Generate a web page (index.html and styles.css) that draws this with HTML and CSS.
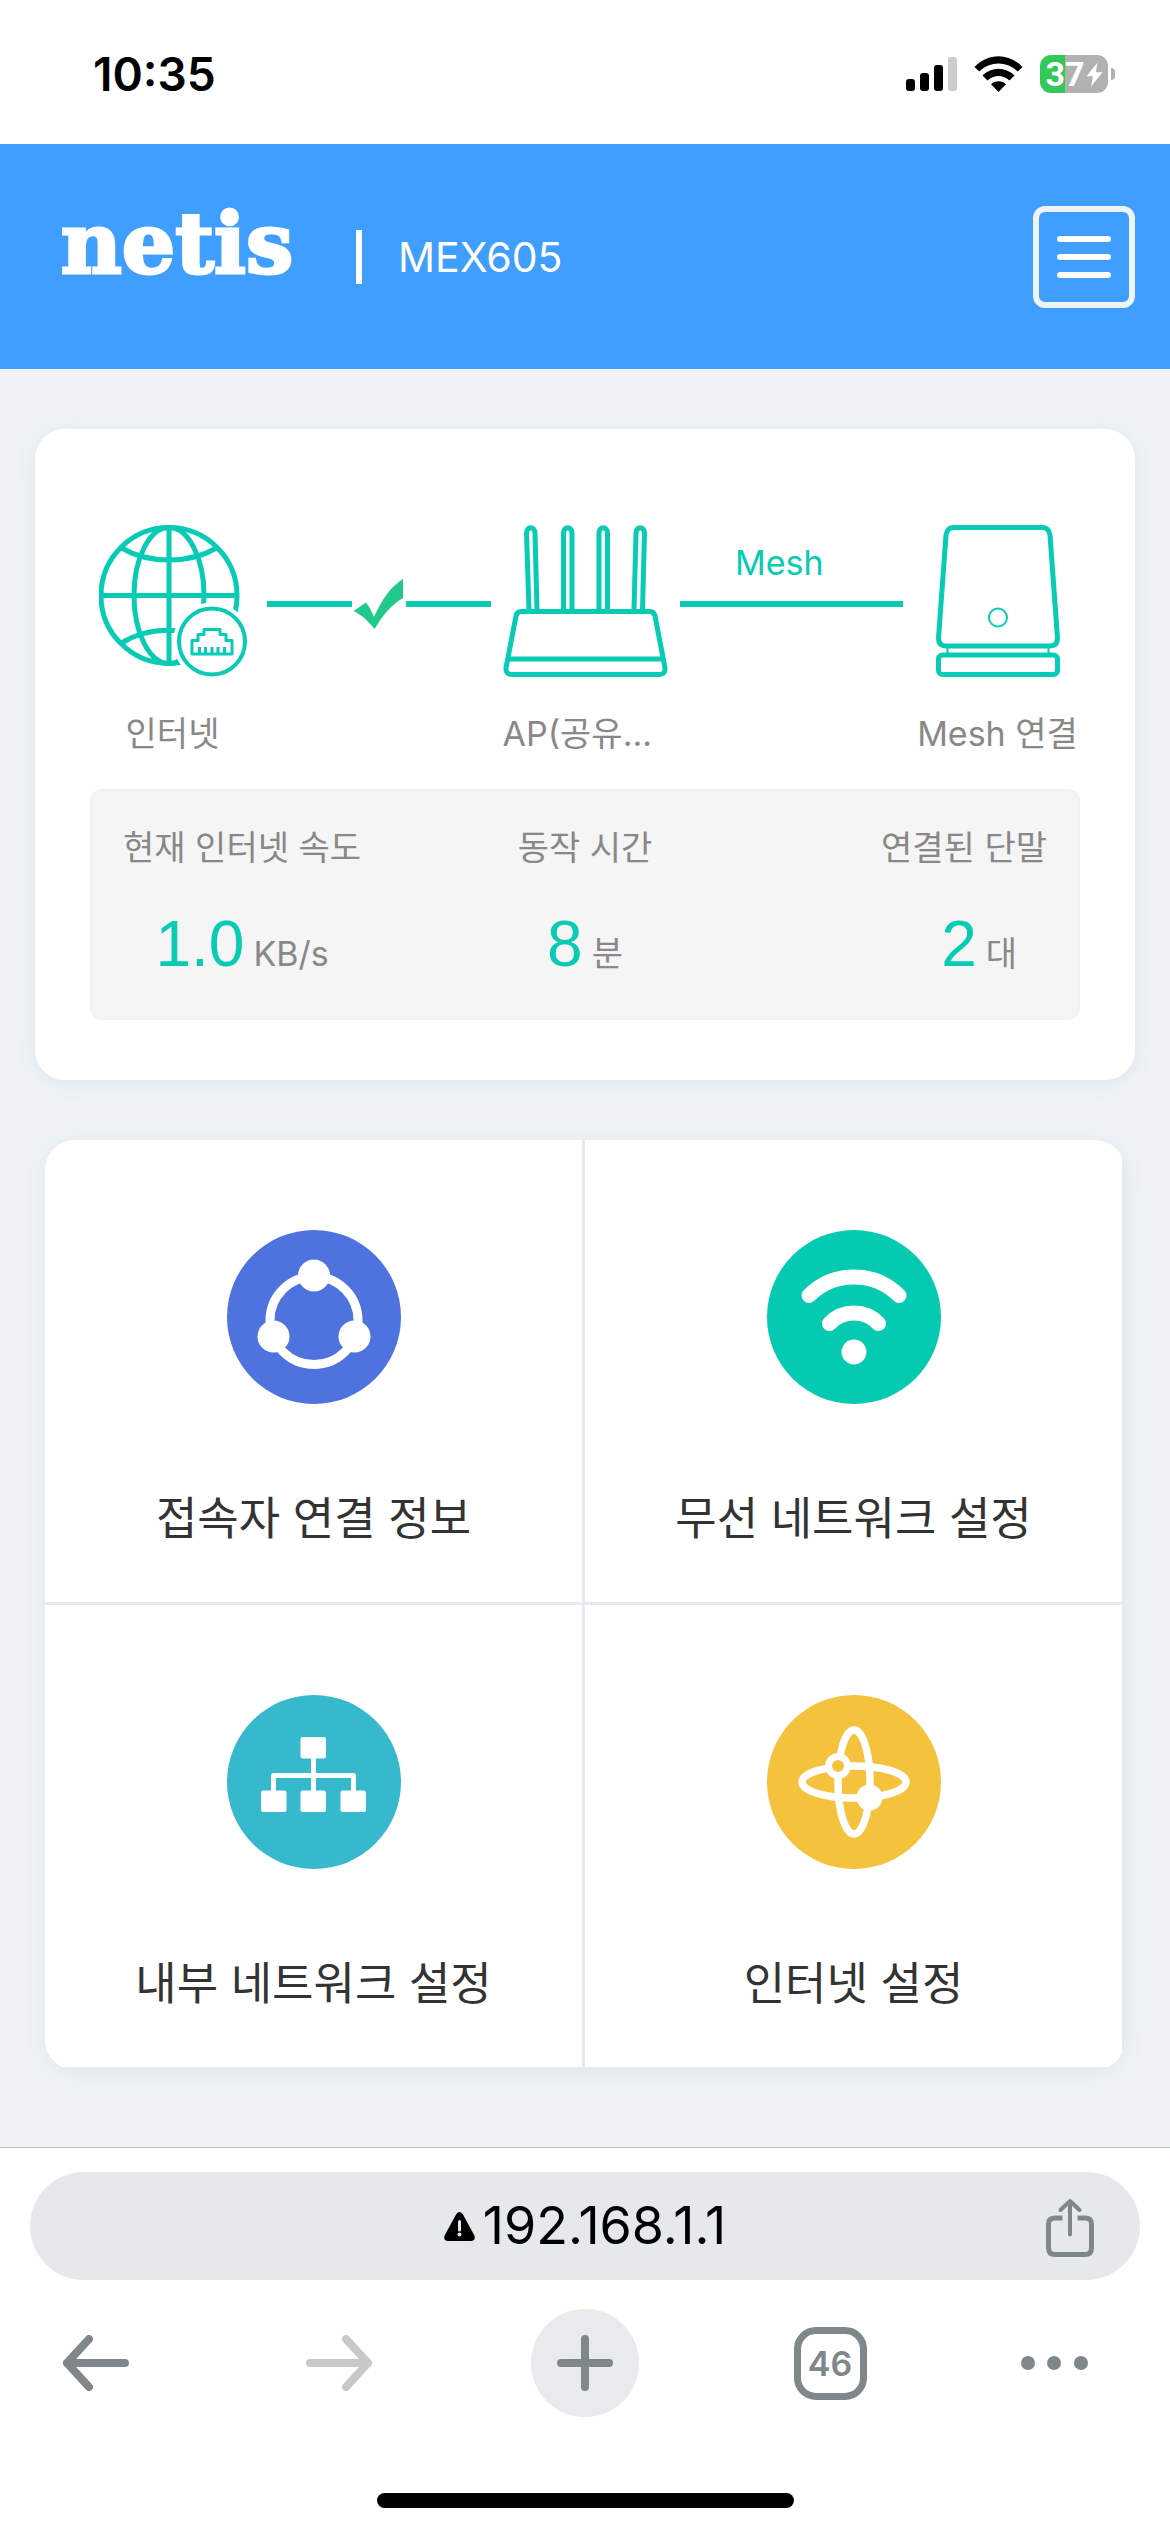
FILE: index.html
```html
<!DOCTYPE html>
<html lang="ko">
<head>
<meta charset="utf-8">
<meta name="viewport" content="width=device-width, initial-scale=1">
<title>netis MEX605</title>
<link rel="stylesheet" href="styles.css">
</head>
<body>
<div class="status-bar">
  <time class="clock">10:35</time>
  <div class="status-icons">
    <svg class="signal" width="51" height="34" viewBox="0 0 51 34" aria-hidden="true">
      <rect x="0" y="22" width="9" height="12" rx="3"/><rect x="14" y="16" width="9" height="18" rx="3"/><rect x="28" y="8" width="9" height="26" rx="3"/><rect x="42" y="0" width="9" height="34" rx="3" fill="#ccc"/>
    </svg>
    <svg class="wifi" width="49" height="36" viewBox="0 0 49 36" aria-hidden="true">
      <path d="M0.500 11C14-3.500 35-3.500 48.500 11L43.800 15.600C33 4.800 16 4.800 5.200 15.600Z"/>
      <path d="M8.500 19.500C17.500 10.500 31.500 10.500 40.500 19.500L35.500 24.500C29 18.500 20 18.500 13.500 24.500Z"/>
      <path d="M17 28.200C21 24.300 28 24.300 32 28.200L24.500 36Z"/>
    </svg>
    <div class="battery">
      <span class="battery-cell"><span class="battery-level">37</span><svg width="17" height="25" viewBox="0 0 17 25" aria-hidden="true"><path d="M11.500 0.500L0.500 14.200H7L5 24.500L16.500 10.200H9.800Z" fill="#fff"/></svg></span>
      <span class="battery-tip"></span>
    </div>
  </div>
</div>

<header class="app-header">
  <span class="logo">netis</span>
  <span class="divider"></span>
  <h1 class="model">MEX605</h1>
  <button class="menu-button" type="button" aria-label="메뉴"><span></span><span></span><span></span></button>
</header>

<main class="content">
  <section class="card">
    <div class="topology">
      <div class="node">
        <svg width="148" height="152" viewBox="0 0 148 152" fill="none" stroke="#07cbb4" stroke-width="5" aria-hidden="true">
          <circle cx="70" cy="70.500" r="68"/>
          <ellipse cx="70" cy="70.500" rx="35" ry="68"/>
          <path d="M70 2V139M2 70.500H138M22.500 23C50 39 90 39 117.500 23M22.500 118C50 101 90 101 117.500 118"/>
          <circle cx="113" cy="116.500" r="39" fill="#fff" stroke="none"/>
          <circle cx="113" cy="116.500" r="33" stroke-width="4"/>
          <path d="M93 129V115.500H99V109.500H105V104.500H121V109.500H127V115.500H133V129Z M100.500 129V122M106.500 129V122M113 129V122M119 129V122M125.500 129V122" stroke-width="3" stroke-linejoin="round"/>
        </svg>
        <span class="node-label">인터넷</span>
      </div>
      <div class="link">
        <span class="line"></span>
        <svg width="54" height="52" viewBox="0 0 54 52" aria-hidden="true"><path d="M1.500 33L14 24.500C17 28 19.500 33 22 39C30 22 38 9 51 1V20C40 26 31 37 22.500 51C16 43 10 37 1.500 33Z" fill="#1fc98a"/></svg>
        <span class="line"></span>
      </div>
      <div class="node">
        <svg width="165" height="152" viewBox="0 0 165 152" fill="none" stroke="#07cbb4" stroke-width="5" stroke-linejoin="round" aria-hidden="true">
          <path d="M26 85L23.500 8C23.500 1 32 1 32 8L34 85M60.500 85V8C60.500 1 69 1 69 8V85M96 85V8C96 1 104.500 1 104.500 8V85M131 85L133 8C133 1 141.500 1 141.500 8L139.500 85"/>
          <path d="M18 86.500H147Q151 86.500 152 91L162 143Q162.500 149.500 156 149.500H9Q2.500 149.500 3 143L13 91Q14 86.500 18 86.500ZM6 134H159"/>
        </svg>
        <span class="node-label node-label-clipped">AP(공유...</span>
      </div>
      <div class="link link-mesh">
        <span class="link-label">Mesh</span>
        <span class="line"></span>
      </div>
      <div class="node">
        <svg width="124" height="152" viewBox="0 0 124 152" fill="none" stroke="#07cbb4" stroke-width="5" aria-hidden="true">
          <path d="M18 2.500H106Q113 2.500 114 10L121.500 113Q121.500 121 114 121H10Q2.500 121 2.500 113L10 10Q11 2.500 18 2.500Z"/>
          <rect x="2.500" y="130" width="119" height="19.500" rx="4"/>
          <path d="M11.500 122V129M112.500 122V129" stroke-width="2"/>
          <circle cx="62" cy="92.500" r="9" stroke-width="2"/>
        </svg>
        <span class="node-label">Mesh 연결</span>
      </div>
    </div>

    <dl class="stats">
      <div class="stat"><dt>현재 인터넷 속도</dt><dd><b>1.0</b><span>KB/s</span></dd></div>
      <div class="stat"><dt>동작 시간</dt><dd><b>8</b><span>분</span></dd></div>
      <div class="stat stat-devices"><dt>연결된 단말</dt><dd><b>2</b><span>대</span></dd></div>
    </dl>
  </section>

  <nav class="tiles" aria-label="설정">
    <a class="tile" href="#clients">
      <svg width="174" height="174" viewBox="0 0 174 174" aria-hidden="true">
        <circle cx="87" cy="87" r="87" fill="#4e73df"/>
        <circle cx="87" cy="90.500" r="44" fill="none" stroke="#fff" stroke-width="9"/>
        <g fill="#fff"><circle cx="87" cy="45.500" r="16"/><circle cx="46.500" cy="106.500" r="16"/><circle cx="127.500" cy="106.500" r="16"/></g>
      </svg>
      <span>접속자 연결 정보</span>
    </a>
    <a class="tile" href="#wireless">
      <svg width="174" height="174" viewBox="0 0 174 174" aria-hidden="true">
        <circle cx="87" cy="87" r="87" fill="#04cab1"/>
        <path d="M42 65.500A64 64 0 0 1 132 65.500M62.500 93.500A34 34 0 0 1 111.500 93.500" fill="none" stroke="#fff" stroke-width="15" stroke-linecap="round"/>
        <circle cx="87" cy="122" r="12.500" fill="#fff"/>
      </svg>
      <span>무선 네트워크 설정</span>
    </a>
    <a class="tile" href="#lan">
      <svg width="174" height="174" viewBox="0 0 174 174" aria-hidden="true">
        <circle cx="87" cy="87" r="87" fill="#36b8cd"/>
        <g fill="#fff"><rect x="73.500" y="42" width="25.500" height="21.500" rx="2"/><rect x="34" y="95.500" width="25.500" height="21.500" rx="2"/><rect x="73.500" y="95.500" width="25.500" height="21.500" rx="2"/><rect x="113.500" y="95.500" width="25.500" height="21.500" rx="2"/></g>
        <path d="M86.500 62V97M46.500 97V80.500H126.500V97" fill="none" stroke="#fff" stroke-width="5" stroke-linejoin="round"/>
      </svg>
      <span>내부 네트워크 설정</span>
    </a>
    <a class="tile" href="#internet">
      <svg width="174" height="174" viewBox="0 0 174 174" aria-hidden="true">
        <circle cx="87" cy="87" r="87" fill="#f5c23e"/>
        <g fill="none" stroke="#fff" stroke-width="7.500"><ellipse cx="87" cy="87" rx="16" ry="52"/><ellipse cx="87" cy="87" rx="52" ry="16"/></g>
        <circle cx="71" cy="71" r="9.500" fill="#f5c23e" stroke="#fff" stroke-width="7"/>
        <circle cx="102.500" cy="102.500" r="13" fill="#fff"/>
      </svg>
      <span>인터넷 설정</span>
    </a>
  </nav>
</main>

<footer class="browser-bar">
  <div class="address-bar">
    <button class="address" type="button">
      <svg width="31" height="29" viewBox="0 0 31 29" aria-hidden="true"><path d="M12.300 2Q15.500-1.800 18.700 2L30.400 23.500Q32 28.500 27 29H4Q-1 28.500 0.600 23.500Z"/><path d="M15.500 9.500V18" stroke="#e6e9ec" stroke-width="3" stroke-linecap="round"/><circle cx="15.500" cy="22.500" r="2" fill="#e6e9ec"/></svg>
      <span>192.168.1.1</span>
    </button>
    <button class="share" type="button" aria-label="공유">
      <svg width="48" height="60" viewBox="0 0 48 60" fill="none" stroke="#80878a" stroke-width="5" stroke-linecap="round" stroke-linejoin="round" aria-hidden="true">
        <path d="M16.500 20H9Q2.500 20 2.500 26V50Q2.500 56.500 9 56.500H39Q45.500 56.500 45.500 50V26Q45.500 20 39 20H31.500" stroke-linecap="butt"/><path d="M24 36.500V3.500M14.500 12L24 3L33.500 12" stroke-width="4"/>
      </svg>
    </button>
  </div>
  <div class="toolbar">
    <button class="tool" type="button" aria-label="뒤로"><svg width="68" height="56" viewBox="0 0 68 56" fill="none" stroke="#80878a" stroke-width="8" stroke-linecap="round" stroke-linejoin="round"><path d="M64 28H6M28 4L6 28L28 52"/></svg></button>
    <button class="tool" type="button" aria-label="앞으로" disabled><svg width="68" height="56" viewBox="0 0 68 56" fill="none" stroke="#c8c8c8" stroke-width="8" stroke-linecap="round" stroke-linejoin="round"><path d="M4 28H62M40 4L62 28L40 52"/></svg></button>
    <button class="tool tool-new" type="button" aria-label="새 탭"><svg width="56" height="56" viewBox="0 0 56 56" fill="none" stroke="#80878a" stroke-width="8" stroke-linecap="round"><path d="M4 28H52M28 4V52"/></svg></button>
    <button class="tool" type="button" aria-label="탭 46개"><span class="tab-count">46</span></button>
    <button class="tool tool-more" type="button" aria-label="더보기"><svg width="68" height="16" viewBox="0 0 68 16" fill="#80878a"><circle cx="7" cy="8" r="7"/><circle cx="33" cy="8" r="7"/><circle cx="60" cy="8" r="7"/></svg></button>
  </div>
  <div class="home-indicator"></div>
</footer>
</body>
</html>
```
FILE: styles.css
```css
* { box-sizing: border-box; }

body {
  margin: 0;
  min-height: 100vh;
  display: flex;
  flex-direction: column;
  background: #eff3f6;
  color: #333;
  font-family: Inter, "Noto Sans CJK KR", sans-serif;
}

svg { display: block; flex: none; }

button {
  margin: 0;
  padding: 0;
  border: 0;
  background: none;
  color: inherit;
  font: inherit;
  cursor: pointer;
}

/* Status bar */
.status-bar {
  display: flex;
  align-items: center;
  justify-content: space-between;
  height: 144px;
  padding: 4px 55px 0 93px;
  background: #fff;
  color: #000;
}
.clock { font-size: 46px; font-weight: 600; line-height: 56px; }
.status-icons { display: flex; align-items: center; gap: 17px; }
.battery { display: flex; align-items: center; gap: 3px; }
.battery-cell {
  display: flex;
  align-items: center;
  justify-content: center;
  gap: 1px;
  width: 68px;
  height: 38px;
  border-radius: 11px;
  background: linear-gradient(90deg, #34c759 37%, #b1b1b1 37%);
}
.battery-level { color: #fff; font-size: 34px; font-weight: 700; line-height: 38px; font-family: Roboto, sans-serif; }
.battery-tip { width: 4px; height: 12px; border-radius: 0 6px 6px 0; background: #b1b1b1; }

/* Header */
.app-header {
  display: flex;
  align-items: center;
  height: 225px;
  padding: 0 35px 0 52px;
  background: #409eff;
  color: #fff;
}
.logo {
  min-width: 250px;
  padding-bottom: 26px;
  font-family: "DejaVu Serif", serif;
  font-size: 84px;
  font-weight: 700;
  line-height: 84px;
  text-align: center;
  -webkit-text-stroke: 3px #fff;
}
.divider { width: 6px; height: 54px; margin: 0 36px 0 54px; background: #fff; }
.model { margin: 0; font-size: 41px; font-weight: 400; line-height: 56px; }
.menu-button {
  display: flex;
  flex-direction: column;
  align-items: center;
  justify-content: center;
  gap: 12px;
  width: 102px;
  height: 102px;
  margin-left: auto;
  border: 6px solid #eff3f6;
  border-radius: 12px;
}
.menu-button span { width: 54px; height: 6px; border-radius: 3px; background: #fff; }

/* Main */
.content {
  flex: 1;
  display: flex;
  flex-direction: column;
  gap: 60px;
  padding: 60px 35px;
}
.card {
  padding: 96px 55px 60px;
  border-radius: 30px;
  background: #fff;
  box-shadow: 0 3px 24px rgba(50, 80, 120, 0.08);
}

/* Network topology */
.topology { display: flex; align-items: flex-start; color: #888; font-size: 34px; }
.node {
  display: flex;
  flex-direction: column;
  align-items: center;
  gap: 32px;
  width: 165px;
}
.node-label { line-height: 50px; white-space: nowrap; }
.node-label-clipped { align-self: flex-start; }
.link { flex: 1; display: flex; align-items: center; height: 158px; margin: 0 12px; }
.line { flex: 1; height: 6px; background: #07cbb4; }
.link-mesh { display: grid; grid-template-rows: 1fr 6px 1fr; }
.link-label {
  align-self: end;
  padding: 0 24px 18px 0;
  color: #07cbb4;
  line-height: 40px;
  text-align: center;
}

/* Live figures */
.stats {
  display: grid;
  grid-template-columns: repeat(3, 1fr);
  margin: 30px 0 0;
  padding: 31px 30px 37px;
  border: 3px solid #f2f2f2;
  border-radius: 12px;
  background: #f5f5f5;
  color: #888;
  font-size: 34px;
}
.stat { display: flex; flex-direction: column; gap: 35px; justify-self: center; }
.stat:first-child { justify-self: start; }
.stat-devices { justify-self: end; }
.stat dt { line-height: 50px; }
.stat dd {
  display: flex;
  align-items: baseline;
  justify-content: center;
  gap: 9px;
  height: 72px;
  margin: 0;
  line-height: 34px;
}
.stat-devices dd { justify-content: flex-end; padding-right: 30px; }
.stat b {
  color: #07cbb4;
  font-family: "Liberation Sans", sans-serif;
  font-size: 64px;
  font-weight: 400;
  line-height: 72px;
}

/* Settings tiles */
.tiles {
  display: grid;
  grid-template-columns: 1fr 1fr;
  margin: 0 10px;
  border-radius: 30px;
  overflow: hidden;
  background: #fff;
  box-shadow: 0 3px 24px rgba(50, 80, 120, 0.08);
}
.tile {
  display: flex;
  flex-direction: column;
  align-items: center;
  gap: 82px;
  padding: 90px 0 50px;
  border-right: 3px solid #e6e9f2;
  border-bottom: 3px solid #e6e9f2;
  color: #333;
  font-size: 45px;
  line-height: 66px;
  text-decoration: none;
}

/* Browser controls */
.browser-bar {
  padding: 24px 30px;
  border-top: 1px solid #bbc0c2;
  background: #fff;
}
.address-bar {
  display: flex;
  align-items: center;
  height: 108px;
  padding: 0 46px;
  border-radius: 54px;
  background: #e6e9ec;
}
.address {
  flex: 1;
  display: flex;
  align-items: center;
  justify-content: center;
  gap: 8px;
  padding-left: 48px;
  color: #000;
  font-size: 52px;
  line-height: 60px;
}
.share { padding-top: 4px; }
.toolbar {
  display: flex;
  justify-content: space-between;
  margin-top: 29px;
  padding: 0 11px;
}
.tool {
  display: flex;
  align-items: center;
  justify-content: center;
  width: 108px;
  height: 108px;
}
.tool-new { border-radius: 50%; background: #e8eaed; }
.tool-more { justify-content: flex-start; }
.tab-count {
  width: 73px;
  height: 73px;
  border: 7px solid #80878a;
  border-radius: 22px;
  color: #80878a;
  font-size: 34px;
  font-weight: 600;
  line-height: 59px;
  text-align: center;
}
.home-indicator {
  width: 417px;
  height: 15px;
  margin: 76px auto 0;
  border-radius: 8px;
  background: #000;
}
```
